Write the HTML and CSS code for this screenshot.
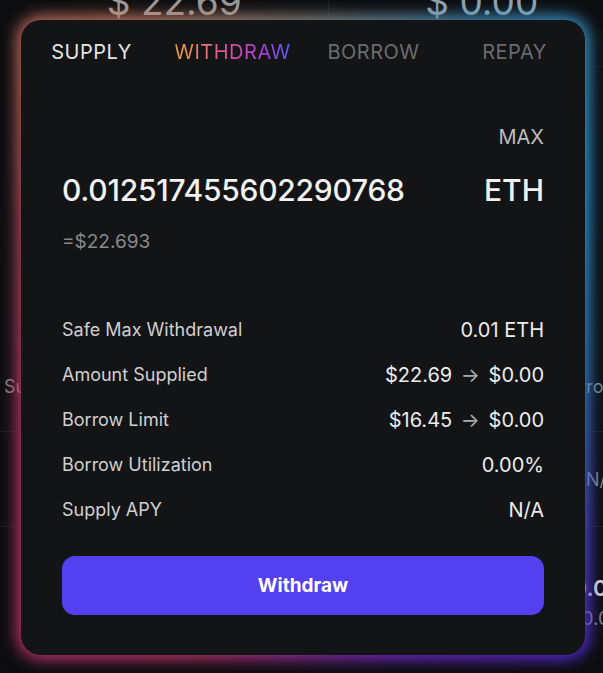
FILE: index.html
```html
<!DOCTYPE html>
<html lang="en">
<head>
    <meta charset="UTF-8">
    <meta name="viewport" content="width=device-width, initial-scale=1.0">
    <title>Withdraw ETH</title>
    <link rel="stylesheet" href="styles.css">
</head>
<body>

<div class="page">
    <div class="stats">
        <div class="stat">$ 22.69</div>
        <div class="stat">$ 0.00</div>
    </div>
    <div class="market-table">
        <div class="market-row"><span>Supply</span><span>Borrow</span></div>
        <div class="market-row"><span></span><span>N/A</span></div>
        <div class="market-row">
            <span></span>
            <span class="market-value"><b>0.00</b><small>0.00</small></span>
        </div>
    </div>
</div>

<div class="modal">
    <div class="glow"></div>
    <div class="card">
        <nav class="tabs">
            <a class="tab">SUPPLY</a>
            <a class="tab active">WITHDRAW</a>
            <a class="tab muted">BORROW</a>
            <a class="tab muted">REPAY</a>
        </nav>

        <div class="amount-box">
            <div class="max">MAX</div>
            <div class="amount-line">
                <span class="amount">0.012517455602290768</span>
                <span class="token">ETH</span>
            </div>
            <div class="usd">=$22.693</div>
        </div>

        <ul class="details">
            <li><span>Safe Max Withdrawal</span><span>0.01 ETH</span></li>
            <li><span>Amount Supplied</span><span>$22.69 <i>&rarr;</i> $0.00</span></li>
            <li><span>Borrow Limit</span><span>$16.45 <i>&rarr;</i> $0.00</span></li>
            <li><span>Borrow Utilization</span><span>0.00%</span></li>
            <li><span>Supply APY</span><span>N/A</span></li>
        </ul>

        <button class="withdraw-btn">Withdraw</button>
    </div>
</div>

</body>
</html>
```

FILE: styles.css
```css
body {
    font-family: Inter, "Noto Sans", sans-serif;
    background-color: #0c0d0f;
    color: #e8e8e8;
    margin: 0;
    padding: 0;
    width: 603px;
    height: 673px;
    overflow: hidden;
    position: relative;
}

/* page behind the dialog */
.page {
    width: 603px;
    overflow: hidden;
}
.stats {
    display: flex;
    margin: -21px 0 0 21px;
    width: 614px;
    height: 87px;
    border-bottom: 1px solid #16171a;
}
.stat {
    flex: 1;
    font-size: 37px;
    color: #9a9a9a;
    text-align: center;
}
.stat + .stat {
    border-left: 1px solid #1a1b1e;
    color: #8fa2b0;
}
.market-table {
    margin-top: 274px;
    width: 622px;
}
.market-row {
    display: flex;
    justify-content: space-between;
    align-items: center;
    height: 94px;
    padding: 0 4px;
    border-top: 1px solid #1a1b1e;
    color: #808080;
    font-size: 18px;
}
.market-row:first-child {
    border-top: none;
    height: 90px;
}
.market-row:last-child {
    height: 150px;
    padding-right: 0;
}
.market-value {
    display: flex;
    flex-direction: column;
    align-items: flex-end;
    gap: 6px;
}
.market-value b {
    color: #d8d8d8;
    font-size: 22px;
    font-weight: 600;
}
.market-value small {
    font-size: 19px;
}

/* dialog */
.modal {
    position: absolute;
    left: 21px;
    top: 20px;
    width: 564px;
    height: 635px;
}
.glow {
    position: absolute;
    inset: -4px;
    border-radius: 24px;
    background: conic-gradient(from 0deg,
        #8f8a84 0deg, #3f8fc0 30deg, #2ca6e6 60deg, #3583d8 100deg,
        #5a2ae0 140deg, #7a2ad0 165deg, #c0356a 200deg,
        #c0356e 250deg, #b4485e 290deg, #c97b5f 330deg, #8f8a84 360deg);
    filter: blur(8px);
}
.card {
    position: relative;
    height: 100%;
    box-sizing: border-box;
    background-color: #131416;
    border-radius: 20px;
    padding: 0 41px;
    display: flex;
    flex-direction: column;
}
.tabs {
    display: flex;
    margin: 0 -41px;
    height: 64px;
    align-items: center;
}
.tab {
    flex: 1;
    text-align: center;
    font-size: 20px;
    letter-spacing: 0.5px;
    color: #e4e4e4;
}
.tab.active {
    flex: none;
    width: 141px;
    background: linear-gradient(90deg, transparent 9%, #f0a040 10%, #e050a0 45%, #a040e0 75%, #5060f0 91%, transparent 92%);
    -webkit-background-clip: text;
    background-clip: text;
    color: transparent;
}
.tab.muted {
    color: #6b6c6e;
}
.amount-box {
    margin-top: 41px;
}
.max {
    text-align: right;
    font-size: 20px;
    color: #bdbdbd;
}
.amount-line {
    display: flex;
    justify-content: space-between;
    align-items: center;
    margin-top: 23px;
    font-size: 30px;
    font-weight: 500;
    color: #f2f2f2;
}
.amount {
    letter-spacing: -0.25px;
}
.usd {
    margin-top: 22px;
    font-size: 19px;
    color: #8a8a8a;
}
.details {
    list-style-type: none;
    padding: 0;
    margin: 54px 0 0;
}
.details li {
    display: flex;
    justify-content: space-between;
    align-items: center;
    height: 45px;
    font-size: 18px;
    color: #d0d0d0;
}
.details li span:last-child {
    font-size: 20px;
    color: #ececec;
}
.details i {
    font-style: normal;
    color: #aaa;
    padding: 0 3px;
}
.withdraw-btn {
    margin-top: 24px;
    height: 59px;
    border: none;
    border-radius: 13px;
    background-color: #5340f0;
    color: white;
    font-family: inherit;
    font-size: 19px;
    font-weight: 700;
}
```
